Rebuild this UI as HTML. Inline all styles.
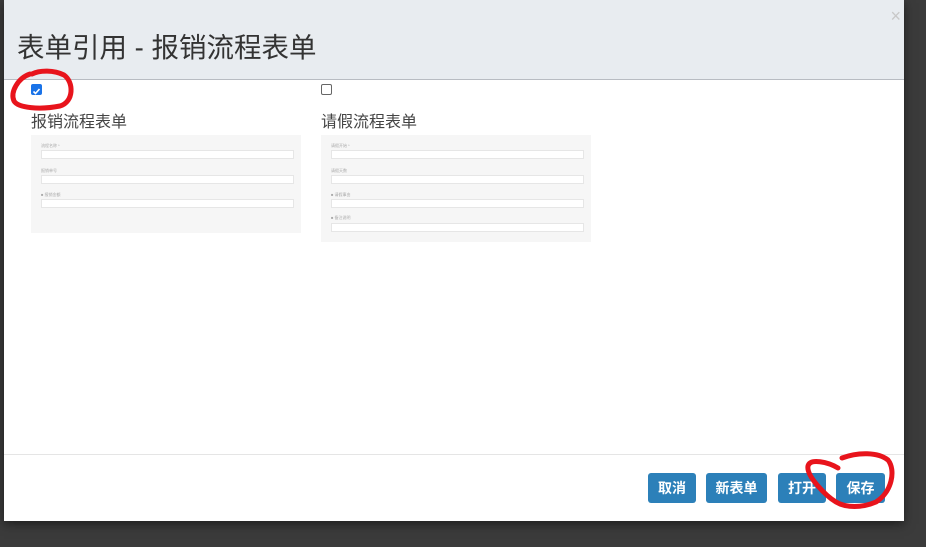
<!DOCTYPE html>
<html><head><meta charset="utf-8"><style>
body{margin:0;width:926px;height:547px;background:#3b3b3b;position:relative;overflow:hidden;font-family:"Liberation Sans","Noto Sans CJK SC",sans-serif}
.modal{position:absolute;left:4px;top:0;width:900px;height:521px;background:#fff;box-shadow:0 3px 10px rgba(0,0,0,.5)}
.hd{height:79px;background:#e8ecf0;border-bottom:1px solid #b8bcc2;position:relative}
.hd h1{margin:0;position:absolute;left:13px;top:25px;font-size:27.5px;font-weight:normal;color:#333}
.x{position:absolute;right:3px;top:6px;color:#c8c8c8;font-size:18px}
.cb{position:absolute;width:11px;height:11px;border-radius:2px}
.t{position:absolute;font-size:16px;color:#444}
.card{position:absolute;background:#f6f6f6}
.f{position:absolute;left:10px;right:7px;height:7px;border:1px solid #e6e6e6;background:#fff}
.l{position:absolute;left:10px;font-size:4px;color:#aaa}
.ft{position:absolute;left:0;right:0;top:454px;border-top:1px solid #e5e5e5}
.b{position:absolute;top:473px;height:30px;background:#2c80b9;color:#fff;border-radius:3px;font-size:14px;line-height:30px;text-align:center;font-weight:bold}
</style></head><body>
<div class="modal">
<div class="hd"><h1>表单引用 - 报销流程表单</h1><span class="x">×</span></div>
<div class="cb" style="left:27px;top:84px;background:#1a73e8"><svg width="11" height="11"><path d="M2.5 5.5l2 2 4-4.5" stroke="#fff" stroke-width="1.6" fill="none"/></svg></div>
<div class="cb" style="left:317px;top:84px;border:1px solid #666;width:9px;height:9px"></div>
<div class="t" style="left:27px;top:108px">报销流程表单</div>
<div class="t" style="left:317px;top:108px">请假流程表单</div>
<div class="card" style="left:27px;top:135px;width:270px;height:98px">
<div class="l" style="top:8px">流程名称 *</div><div class="f" style="top:15px"></div>
<div class="l" style="top:33px">报销单号</div><div class="f" style="top:40px"></div>
<div class="l" style="top:57px">■ 报销金额</div><div class="f" style="top:64px"></div>
</div>
<div class="card" style="left:317px;top:135px;width:270px;height:107px">
<div class="l" style="top:8px">请假开始 *</div><div class="f" style="top:15px"></div>
<div class="l" style="top:33px">请假天数</div><div class="f" style="top:40px"></div>
<div class="l" style="top:57px">■ 请假事由</div><div class="f" style="top:64px"></div>
<div class="l" style="top:80px">■ 备注说明</div><div class="f" style="top:88px"></div>
</div>
<div class="ft"></div>
<div class="b" style="left:644px;width:48px">取消</div>
<div class="b" style="left:702px;width:61px">新表单</div>
<div class="b" style="left:774px;width:48px">打开</div>
<div class="b" style="left:832px;width:49px">保存</div>
</div>
<svg style="position:absolute;left:0;top:0" width="926" height="547"><g fill="none" stroke="#e8141c" stroke-width="5" stroke-linecap="round">
<path d="M30 74C18 78 10 92 14 101C18 108 40 110 60 106C74 102 74 82 64 75C54 70 40 70 32 74"/>
<path d="M838 468C828 462 810 458 808 466C806 476 826 496 836 502C846 508 862 508 876 502C892 492 896 470 888 460C878 452 858 452 842 458"/>
</g></svg>
</body></html>
